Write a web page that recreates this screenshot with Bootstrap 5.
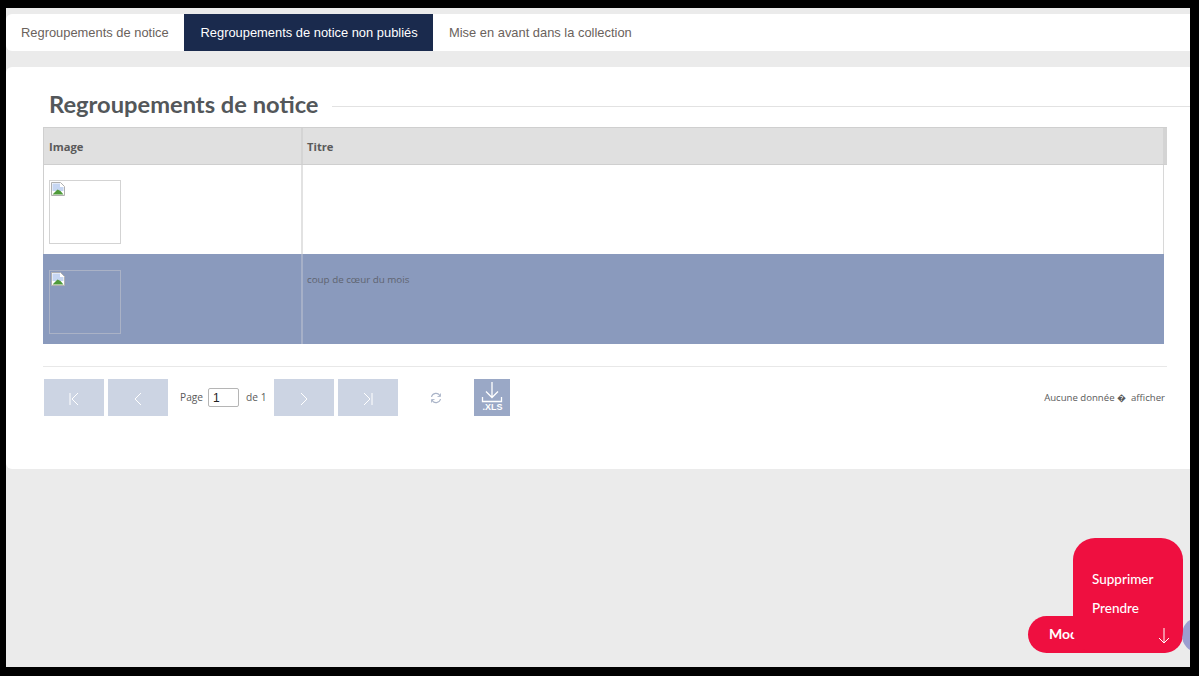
<!DOCTYPE html>
<html lang="fr"><head><meta charset="utf-8"><title>Regroupements de notice</title>
<link rel="stylesheet" href="https://cdn.jsdelivr.net/npm/bootstrap@5.3.0/dist/css/bootstrap.min.css">
<style>
html,body{height:100%;overflow:hidden}
body{background:#000;padding:8px 9px 9px 6px;font-family:"Liberation Sans",Arial,sans-serif}
.screen{background:#ebebeb;height:659px;position:relative;overflow:hidden}
.tabbar{background:#fff;margin-top:6px;height:37px;border-radius:6px 0 0 6px}
.tabbar a{display:block;padding:0 16px;line-height:37px;font-size:12.9px;color:#6a625c;text-decoration:none;height:37px;white-space:nowrap}
.tabbar a:first-child{width:178px;padding-left:15px}
.tabbar a.on{background:#1a2a4d;color:#fff;width:249px;padding-left:16.5px}
.panel{background:#fff;margin-top:16px;height:402px;border-radius:6px 0 0 6px;padding:21px 0 0 37px}
.headline{height:36px;margin-bottom:3px}
.headline h2{font-family:Lato,sans-serif;font-weight:700;font-size:23.7px;color:#53575a;margin:-5px 13px 0 6px;white-space:nowrap;line-height:34px}
.headline i{flex:1;border-top:1px solid #e2e2e2;margin-top:1px}
.grid-wrap{width:1124px;position:relative}
.grid-head{background:#e0e0e0;height:38px;border:1px solid #cfcfcf;border-width:1px 0 1px 1px;font-size:11.2px;font-weight:700;color:#5a5a5a;font-family:"Open Sans",sans-serif}
.grid-head div{line-height:37px;padding-left:4px}
.grid-head div:first-child{width:259px;border-right:2px solid #d4d4d4;padding-left:5px}
.grid-head div:nth-child(2){flex:1;border-right:4px solid #d4d4d4}
.grid-row{width:1121px;height:89px;border-left:1px solid #cfcfcf;border-right:1px solid #d8d8d8}
.grid-row .c1{width:259px;padding:15px 0 0 5px;border-right:2px solid #e2e2e2}
.grid-row .c2{flex:1;padding:19px 0 0 4px;font-size:9.8px;line-height:12px;color:#5f6470;font-family:"Open Sans",sans-serif}
.grid-row.sel{background:#8a9abd;height:90px;border-color:#8a9abd}
.grid-row.sel .c1{border-right-color:#a6b0c8;padding-top:16px}
.grid-row.sel .c2{padding-top:20px}
.broken{width:72px;height:64px;border:1px solid #d3d3d3;display:block;padding:1px}
.sel .broken{border-color:#aab2c6}
.pager-rule{border-top:1px solid #e8e8e8;margin:22px 0 12px;width:1124px}
.pager{width:1123px;height:37px;padding-left:1px;font-size:10.2px;color:#5a5a5a;font-family:"Open Sans",sans-serif}
.pg{width:60px;height:37px;background:#ccd4e3;margin-right:4px;padding:0;border:0;border-radius:0}
.pgnum{width:31px;height:19px;border:1px solid #b5b5b5;border-radius:2px;font:12px "Liberation Sans",sans-serif;color:#222;padding:0 4px;margin:0 7px 0 5px}
.after-page{margin-left:8px}
.after-of{margin-left:8px}
.refresh{margin-left:28px}
.xls{width:36px;height:37px;background:#9aa8c6;margin-left:32px}
.xls b{font:700 9px/9px "Liberation Sans",sans-serif}
.tail{margin-left:auto;margin-right:1px;margin-top:1px;font-size:9.6px}
.tail b{font-size:9px}
.fab-btn{position:absolute;left:1022px;top:608px;width:155px;height:37px;border-radius:19px;background:#ef0f40;color:#fff;font:700 14px Lato,sans-serif;padding:9px 0 0 21px}
.fab-menu{position:absolute;left:1067px;top:530px;width:110px;height:115px;border-radius:22px;background:#ef0f40;color:#fff;font:500 13.5px Lato,sans-serif;padding:32px 0 0 19px}
.fab-menu span{display:block;height:29px;line-height:18px}
.fab-menu svg{position:absolute;right:13px;bottom:9px}
.bubble{position:absolute;left:1176px;top:610px;width:30px;height:34px;border-radius:50%;background:#9b9ed0}
</style></head>
<body>
<div class="screen">
  <nav class="tabbar d-flex">
    <a href="#">Regroupements de notice</a>
    <a href="#" class="on">Regroupements de notice non publiés</a>
    <a href="#">Mise en avant dans la collection</a>
  </nav>
  <section class="panel">
    <div class="headline d-flex align-items-center"><h2>Regroupements de notice</h2><i></i></div>
    <div class="grid-wrap">
      <div class="grid-head d-flex"><div>Image</div><div>Titre</div></div>
      <div class="grid-row d-flex">
        <div class="c1"><span class="broken"><svg class="d-block" width="14" height="14" viewBox="0 0 14 14"><path d="M.5.5h9l4 4v9H.5z" fill="#fff" stroke="#b0b0b0"/><path d="M1.500 1.500h7.500v3.500h3.500v4H1.500z" fill="#c6d6f2"/><path d="M1.500 12.500l5-5 3 1.500 3 3.500z" fill="#4f9a3a"/></svg></span></div>
        <div class="c2"></div>
      </div>
      <div class="grid-row sel d-flex">
        <div class="c1"><span class="broken"><svg class="d-block" width="14" height="14" viewBox="0 0 14 14"><path d="M.5.5h9l4 4v9H.5z" fill="#fff" stroke="#b0b0b0"/><path d="M1.500 1.500h7.500v3.500h3.500v4H1.500z" fill="#c6d6f2"/><path d="M1.500 12.500l5-5 3 1.500 3 3.500z" fill="#4f9a3a"/></svg></span></div>
        <div class="c2">coup de cœur du mois</div>
      </div>
      <div class="pager-rule"></div>
      <div class="pager d-flex align-items-center">
        <button class="pg btn" aria-label="Première"><svg width="12" height="14" viewBox="0 0 12 14" fill="none" stroke="#fff"><path d="M2 1v12M10 1L4 7l6 6"/></svg></button>
        <button class="pg btn" aria-label="Précédente"><svg width="10" height="14" viewBox="0 0 10 14" fill="none" stroke="#fff"><path d="M8 1L2 7l6 6"/></svg></button>
        <span class="after-page">Page</span><input class="pgnum" value="1" aria-label="Page"><span>de 1</span>
        <button class="pg btn after-of" aria-label="Suivante"><svg width="10" height="14" viewBox="0 0 10 14" fill="none" stroke="#fff"><path d="M2 1l6 6-6 6"/></svg></button>
        <button class="pg btn" aria-label="Dernière"><svg width="12" height="14" viewBox="0 0 12 14" fill="none" stroke="#fff"><path d="M10 1v12M2 1l6 6-6 6"/></svg></button>
        <svg class="refresh" width="12" height="12" viewBox="0 0 12 12" fill="none" stroke="#aab4c8" stroke-width="1.1"><path d="M1.5 5A4.5 4.5 0 0 1 10 4M10.500 7A4.500 4.500 0 0 1 2 8"/><path d="M10.500 1.500V4.500H7.500M1.500 10.500V7.500H4.500" stroke-width=".9"/></svg>
        <div class="xls d-flex flex-column align-items-center text-white"><svg width="24" height="24" viewBox="0 0 24 24" fill="none" stroke="#fff" stroke-width="1.300"><path d="M12 3v15M6 12.500l6 6 6-6M2.500 18v4.500h19V18"/></svg><b>.XLS</b></div>
        <span class="tail">Aucune donnée <b>�</b>&nbsp; afficher</span>
      </div>
    </div>
  </section>
  <div class="fab-btn">Modifier</div>
  <div class="bubble"></div>
  <div class="fab-menu"><span>Supprimer</span><span>Prendre</span><svg width="12" height="17" viewBox="0 0 12 17" fill="none" stroke="#fff"><path d="M6 1v15M1 11l5 5 5-5"/></svg></div>
</div>
<script src="https://cdn.jsdelivr.net/npm/bootstrap@5.3.0/dist/js/bootstrap.bundle.min.js"></script>
</body></html>
